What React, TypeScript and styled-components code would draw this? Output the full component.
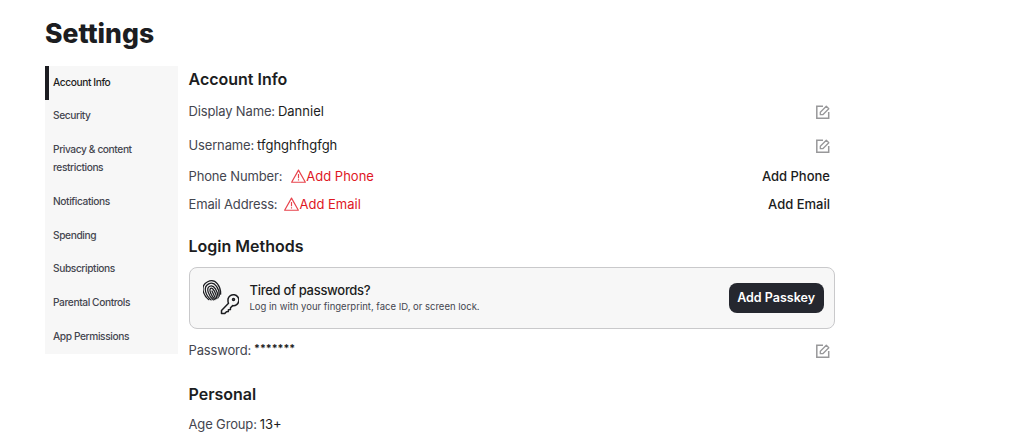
import * as React from "react";
import styled, { createGlobalStyle } from "styled-components";

const sideItems = [
  "Account Info",
  "Security",
  "Privacy & content restrictions",
  "Notifications",
  "Spending",
  "Subscriptions",
  "Parental Controls",
  "App Permissions",
];

const EditIcon = () => (
  <EditSvg viewBox="0 0 14 14" fill="none" stroke="#98989a" strokeWidth="1.5">
    <path d="M7 1.3H.8v11.900h11.900V7" />
    <path d="M4.300 9.700V7.300L10.300 1.200l2.500 2.500-6 6z" strokeWidth="1.300" strokeLinejoin="round" />
  </EditSvg>
);

const WarnIcon = () => (
  <WarnSvg viewBox="0 0 14 13" fill="none" stroke="#e8434c" strokeWidth="1.1" strokeLinejoin="round">
    <path d="M7 1 L13.4 12.3 H0.6 Z" />
    <path d="M7 4.6v4M7 9.6v1.2" />
  </WarnSvg>
);

const PasskeyIcon = () => (
  <PasskeySvg viewBox="0 0 36 36" fill="none" stroke="#1c1d21" strokeLinecap="round">
    <g strokeWidth="1.250" transform="rotate(-25 9 11)">
      <path d="M2.500 17.500C-.5 12 -.5 1 9 .8c9.500-.2 9.500 11 6.500 16.700" />
      <path d="M4.500 18.700C1.500 13 1.800 3.400 9 3.200c7.200-.2 7.500 9.800 4.500 15.500" />
      <path d="M6.500 19.700C4 14 4.200 5.800 9 5.700c4.800-.1 5 8.300 2.800 14" />
      <path d="M8 20C6.300 15 6.500 8.200 9 8.100c2.500-.1 2.700 7 1.200 11.900" />
      <path d="M9 19.500V11" />
    </g>
    <g strokeWidth="1.500" strokeLinejoin="round">
      <path d="M25 19a5.500 5.500 0 1 1 4.700 6.600l-2.200 2.100-.1 1.900-2 .1-.1 1.900-1.800.1-1.900 1.900h-3.100v-3l7-7.300c-.4-1-.6-1.600-.5-2.300z" />
      <circle cx="30.500" cy="19.500" r="1" />
    </g>
  </PasskeySvg>
);

export default function App() {
  return (
    <Page>
      <GlobalStyle />
      <Title>Settings</Title>
      <Columns>
        <Sidebar>
          {sideItems.map((item, i) => (
            <SideItem key={item} $active={i === 0}>{item}</SideItem>
          ))}
        </Sidebar>
        <Content>
          <Heading>Account Info</Heading>
          <Row>
            <Field><Label>Display Name:</Label> <Value>Danniel</Value></Field>
            <EditIcon />
          </Row>
          <Row>
            <Field><Label>Username:</Label> <Value>tfghghfhgfgh</Value></Field>
            <EditIcon />
          </Row>
          <Row $short>
            <Field>
              <Label>Phone Number:</Label>
              <Warning $gap={6}><WarnIcon />Add Phone</Warning>
            </Field>
            <ActionLink>Add Phone</ActionLink>
          </Row>
          <Row $short>
            <Field>
              <Label>Email Address:</Label>
              <Warning $gap={4}><WarnIcon />Add Email</Warning>
            </Field>
            <ActionLink>Add Email</ActionLink>
          </Row>

          <Section>
            <Heading $flush>Login Methods</Heading>
            <PasskeyCard>
              <PasskeyIcon />
              <CardText>
                <CardTitle>Tired of passwords?</CardTitle>
                <CardSub>Log in with your fingerprint, face ID, or screen lock.</CardSub>
              </CardText>
              <PasskeyBtn>Add Passkey</PasskeyBtn>
            </PasskeyCard>
            <Row>
              <Field><Label>Password:</Label> <Stars>*******</Stars></Field>
              <EditIcon />
            </Row>
          </Section>

          <Section $tight>
            <Heading $flush>Personal</Heading>
            <Row>
              <Field><Label>Age Group:</Label> <Value>13+</Value></Field>
            </Row>
          </Section>
        </Content>
      </Columns>
    </Page>
  );
}

const GlobalStyle = createGlobalStyle`
  html, body {
    margin: 0;
    padding: 0;
    height: 100%;
    overflow: hidden;
    background: #fff;
  }
  body {
    font-family: Inter, "Noto Sans", "Liberation Sans", sans-serif;
    color: #1c1d21;
  }
`;

const Page = styled.div`
  width: 1028px;
  height: 433px;
  overflow: hidden;
  padding: 16px 0 0 45px;
  box-sizing: border-box;
`;

const Title = styled.h1`
  margin: 0 0 16px;
  height: 34px;
  font-size: 26.500px;
  line-height: 34px;
  font-weight: 800;
  color: #1c1d21;
`;

const Columns = styled.div`
  display: flex;
  align-items: flex-start;
  gap: 11px;
`;

const Sidebar = styled.nav`
  width: 133px;
  background: #f7f7f7;
  flex-shrink: 0;
`;

const SideItem = styled.div<{ $active?: boolean }>`
  padding: 6.500px 8px 9.250px ${(p) => (p.$active ? "4px" : "8px")};
  border-left: ${(p) => (p.$active ? "4px solid #1c1d21" : "none")};
  font-size: 10.200px;
  letter-spacing: -0.4px;
  line-height: 18px;
  font-weight: 500;
  color: ${(p) => (p.$active ? "#1c1d21" : "#44464f")};
`;

const Content = styled.main`
  width: 646px;
  margin-left: -0.500px;
`;

const Heading = styled.h2<{ $flush?: boolean }>`
  margin: 0 0 ${(p) => (p.$flush ? "0" : "2px")};
  height: 26px;
  font-size: 16px;
  line-height: 26px;
  font-weight: 600;
  color: #1c1d21;
`;

const Section = styled.section<{ $tight?: boolean }>`
  margin-top: ${(p) => (p.$tight ? "14px" : "15px")};
`;

const Row = styled.div<{ $short?: boolean }>`
  display: flex;
  align-items: center;
  justify-content: space-between;
  height: ${(p) => (p.$short ? "28px" : "34px")};
  padding-right: 4.500px;
`;

const Field = styled.div`
  display: flex;
  align-items: center;
  gap: 3px;
  font-size: 13px;
`;

const Label = styled.span`
  color: #44464f;
  letter-spacing: -0.15px;
`;

const Value = styled.span`
  color: #1c1d21;
`;

const Stars = styled.span`
  font-size: 10.500px;
  font-weight: 700;
  margin-bottom: 3px;
  color: #1c1d21;
`;

const Warning = styled.span<{ $gap: number }>`
  display: inline-flex;
  align-items: center;
  margin-left: ${(p) => p.$gap}px;
  color: #e0171f;
`;

const ActionLink = styled.span`
  font-size: 13px;
  font-weight: 500;
  color: #1c1d21;
`;

const EditSvg = styled.svg`
  width: 14px;
  height: 14px;
  margin-top: 2px;
`;

const WarnSvg = styled.svg`
  width: 15px;
  height: 14px;
  flex-shrink: 0;
`;

const PasskeyCard = styled.div`
  display: flex;
  align-items: center;
  height: 62px;
  margin: 8px 0 4px;
  padding: 0 10px 0 13px;
  box-sizing: border-box;
  background: #f7f7f7;
  border: 1px solid #c9c9cb;
  border-radius: 8px;
`;

const PasskeySvg = styled.svg`
  width: 36px;
  height: 36px;
  flex-shrink: 0;
`;

const CardText = styled.div`
  flex: 1;
  margin-left: 11px;
`;

const CardTitle = styled.div`
  font-size: 13px;
  letter-spacing: -0.3px;
  line-height: 18px;
  font-weight: 500;
  color: #1c1d21;
  margin-top: -2px;
  margin-bottom: 1px;
`;

const CardSub = styled.div`
  font-size: 9.500px;
  line-height: 14px;
  color: #44464f;
`;

const PasskeyBtn = styled.div`
  padding: 0 8.500px;
  height: 30px;
  line-height: 30px;
  border-radius: 8px;
  background: #25272f;
  color: #fff;
  font-size: 12.500px;
  font-weight: 600;
`;
